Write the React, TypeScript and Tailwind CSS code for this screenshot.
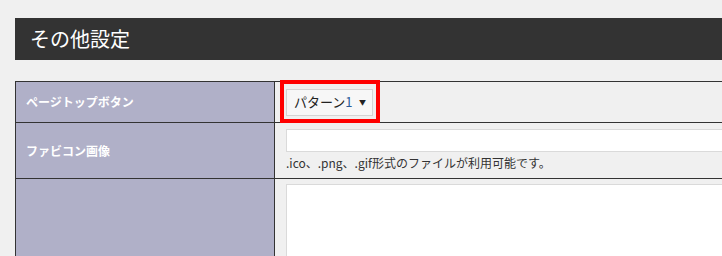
export default function App() {
  const jp = { fontFamily: '"Noto Sans CJK JP", "Noto Sans", sans-serif' }

  return (
    <div className="w-[722px] h-[256px] overflow-hidden bg-[#f0f0f0] pl-[15px] pt-[18px]" style={jp}>
      <div className="h-[42px] bg-[#333333] flex items-center pl-[15px]">
        <h2 className="text-[20px] leading-none text-white">その他設定</h2>
      </div>

      <div className="mt-[21px] w-[900px] border-t border-l border-[#333333]">
        {/* row 1 */}
        <div className="flex h-[41px] border-b border-[#333333]">
          <div className="w-[259px] shrink-0 bg-[#b0b0c8] border-r border-[#333333] pl-[10px] flex items-center">
            <span className="text-[12px] font-bold text-white">ページトップボタン</span>
          </div>
          <div className="relative flex-1 pl-[11px] flex items-center">
            <div className="w-[87px] h-[27px] border border-[#d4d4d4] bg-[#f7f7f7] flex items-center justify-between pl-[7px] pr-[5px]">
              <span className="text-[13px] text-[#222]">パターン<span className="text-[#2a5d9a]">1</span></span>
              <span className="text-[7px] text-[#222] pr-[1px]">▼</span>
            </div>
            <div className="absolute left-[5px] top-[-2px] w-[100px] h-[43px] border-4 border-[#ff0000]" />
          </div>
        </div>

        {/* row 2 */}
        <div className="flex h-[56px] border-b border-[#333333]">
          <div className="w-[259px] shrink-0 bg-[#b0b0c8] border-r border-[#333333] pl-[10px] flex items-center">
            <span className="text-[12px] font-bold text-white">ファビコン画像</span>
          </div>
          <div className="flex-1 pl-[11px] pt-[6px]">
            <div className="h-[23px] w-full border border-[#dadada] bg-white" />
            <p className="mt-[3px] text-[12px] leading-[16px] text-[#333]">.ico、.png、.gif形式のファイルが利用可能です。</p>
          </div>
        </div>

        {/* row 3 */}
        <div className="flex h-[120px] border-b border-[#333333]">
          <div className="w-[259px] shrink-0 bg-[#b0b0c8] border-r border-[#333333]" />
          <div className="flex-1 pl-[11px] pt-[5px]">
            <div className="h-[100px] w-full border border-[#dadada] bg-white" />
          </div>
        </div>
      </div>
    </div>
  )
}
